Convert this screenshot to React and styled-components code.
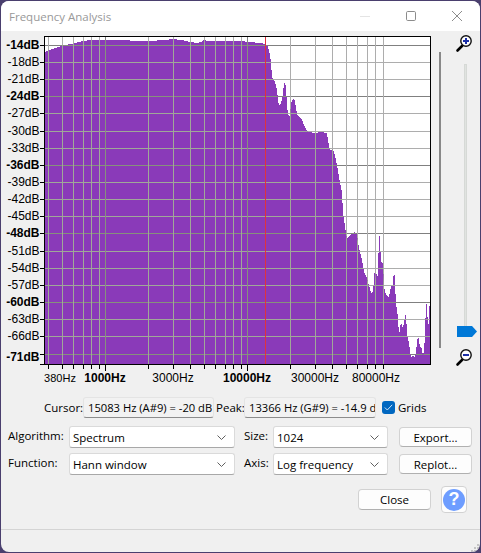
import React from 'react'
import styled, { createGlobalStyle } from 'styled-components'

const GlobalStyle = createGlobalStyle`
  html, body {
    margin: 0;
    padding: 0;
    background: #4a3f6e;
  }
`

const Win = styled.div`
  width: 479px;
  height: 551px;
  margin: 1px;
  display: flex;
  flex-direction: column;
  overflow: hidden;
  border-radius: 8px;
  background: #f0f0f0;
  color: #000;
  font-family: "Open Sans", "Noto Sans", sans-serif;
  font-size: 11.5px;
`

const TitleBar = styled.div`
  height: 30px;
  flex: none;
  display: flex;
  align-items: center;
  justify-content: space-between;
  background: #fff;
  padding-left: 8px;
  color: #999;
`

const WinButtons = styled.div`
  display: flex;
  align-items: center;
`

const WinButton = styled.svg`
  width: 46px;
  height: 30px;
  display: block;
`

const ChartRow = styled.div`
  height: 360px;
  flex: none;
  display: flex;
`

const Chart = styled.svg`
  width: 435px;
  height: 360px;
  flex: none;
  display: block;
`

const Rail = styled.div`
  width: 2px;
  height: 296px;
  flex: none;
  margin: 21px 0 0 3px;
  background: #888;
`

const SliderCol = styled.div`
  flex: 1;
  display: flex;
  flex-direction: column;
  align-items: center;
  padding: 2px 0 0 9px;
`

const ZoomIcon = styled.svg`
  width: 20px;
  height: 20px;
  flex: none;
  display: block;
`

const Track = styled.div`
  position: relative;
  width: 3px;
  height: 263px;
  flex: none;
  margin: 11px 0 20px;
  background: #e0e3e0;
  border: 1px solid #d6d9d6;
  box-sizing: border-box;
`

const Thumb = styled.svg`
  position: absolute;
  left: -8px;
  bottom: -11px;
  width: 20px;
  height: 11px;
  display: block;
`

const InfoRow = styled.div`
  height: 21px;
  flex: none;
  margin-top: 6px;
  padding-left: 43px;
  display: flex;
  align-items: center;
`

const InfoLabel = styled.span`
  width: ${props => props.$width}px;
  flex: none;
  box-sizing: border-box;
  padding-left: ${props => props.$pad || 0}px;
  white-space: nowrap;
`

const ReadOut = styled.div`
  width: ${props => props.$width}px;
  height: 21px;
  flex: none;
  box-sizing: border-box;
  padding: 0 0 0 4px;
  overflow: hidden;
  white-space: nowrap;
  font-size: 11.2px;
  line-height: 19px;
  background: #f2f2f2;
  border: 1px solid #e4e4e4;
  border-bottom: 1px solid #8c8c8c;
  border-radius: 3px;
`

const GridCheck = styled.label`
  display: flex;
  align-items: center;
  gap: 3px;
  margin-left: 6px;
`

const CheckBox = styled.span`
  width: 13px;
  height: 13px;
  display: flex;
  align-items: center;
  justify-content: center;
  background: #0067c0;
  border-radius: 3px;
`

const FormRow = styled.div`
  height: 22px;
  flex: none;
  margin-top: ${props => props.$top}px;
  padding-left: 7px;
  display: flex;
  align-items: center;
`

const Field = styled.div`
  display: flex;
  align-items: center;
  margin-right: ${props => props.$after}px;
`

const FieldLabel = styled.span`
  width: ${props => props.$width}px;
  flex: none;
  margin-top: -3px;
`

const Select = styled.div`
  width: ${props => props.$width}px;
  height: 22px;
  box-sizing: border-box;
  display: flex;
  align-items: center;
  justify-content: space-between;
  padding: 0 8px 0 3px;
  background: #fff;
  border: 1px solid #dadada;
  border-bottom-color: #a8a8a8;
  border-radius: 3px;
`

const Button = styled.button`
  width: 73px;
  height: ${props => props.$height || 20}px;
  flex: none;
  padding: 0;
  background: #fdfdfd;
  border: 1px solid #d2d2d2;
  border-bottom-color: #b0b0b0;
  border-radius: 4px;
  font: inherit;
  color: #000;
`

const ActionRow = styled.div`
  height: 27px;
  flex: none;
  margin-top: 11px;
  padding-right: 13px;
  display: flex;
  align-items: center;
  justify-content: flex-end;
  gap: 10px;
`

const HelpButton = styled.button`
  width: 26px;
  height: 27px;
  padding: 0;
  display: flex;
  align-items: center;
  justify-content: center;
  background: #fdfdfd;
  border: 1px solid #d2d2d2;
  border-radius: 4px;
`

const HelpDot = styled.span`
  width: 22px;
  height: 22px;
  display: flex;
  align-items: center;
  justify-content: center;
  border-radius: 50%;
  background: #6e9dff;
  color: #fff;
  font-family: "Liberation Sans", sans-serif;
  font-size: 18px;
  font-weight: bold;
`

const Footer = styled.div`
  position: relative;
  flex: 1;
  margin-top: 16px;
  border-top: 1px solid #d4d4d4;
`

const Grip = styled.svg`
  position: absolute;
  right: 1px;
  bottom: 0;
  width: 9px;
  height: 9px;
  display: block;
`

const PLOT = { left: 45, right: 430, top: 36, bottom: 364 }

// x position of a frequency on the log axis
const freqX = f => Math.round(105 + 142 * Math.log10(f / 1000))

const FREQS = [400, 500, 600, 700, 800, 900, 1000, 2000, 3000, 4000, 5000, 6000, 7000, 8000, 9000, 10000, 20000, 30000, 40000, 50000, 60000, 70000, 80000, 90000]

const DB_ROWS = [
  ['-14dB', 45, true], ['-18dB', 62], ['-21dB', 79], ['-24dB', 96, true],
  ['-27dB', 113], ['-30dB', 131], ['-33dB', 148], ['-36dB', 165, true],
  ['-39dB', 182], ['-42dB', 199], ['-45dB', 216], ['-48dB', 233, true],
  ['-51dB', 251], ['-54dB', 268], ['-57dB', 285], ['-60dB', 302, true],
  ['-63dB', 319], ['-66dB', 336], ['-71dB', 354, true]
]

const HZ_LABELS = [
  ['380Hz', 60, false, 11], ['1000Hz', 105, true, 12], ['3000Hz', 173, false, 12],
  ['10000Hz', 247, true, 12], ['30000Hz', 315, false, 12], ['80000Hz', 376, false, 12]
]

const SPECTRUM = [
  [45, 52], [47, 51], [52, 49], [58, 47], [64, 45], [72, 44], [75, 43], [83, 41], [90, 40], [129, 40], [130, 41], [148, 41],
  [165, 40], [172, 39], [182, 40], [190, 42], [197, 43], [201, 42], [204, 40], [208, 41], [240, 41], [250, 42], [260, 43], [266, 44],
  [268, 47], [270, 55], [271, 62], [272, 77], [275, 82], [277, 90], [278, 100], [279, 105], [281, 104], [283, 93], [284, 83], [285, 82],
  [286, 87], [287, 107], [289, 117], [290, 115], [291, 103], [293, 99], [294, 98], [296, 107], [297, 115], [302, 120], [305, 127], [308, 132],
  [315, 133], [320, 132], [327, 133], [328, 140], [330, 150], [333, 149], [335, 155], [337, 165], [339, 177], [340, 182], [342, 193], [343, 213],
  [346, 233], [347, 239], [352, 233], [355, 232], [357, 235], [359, 248], [362, 260], [364, 272], [367, 278], [371, 293], [373, 292], [375, 267],
  [376, 280], [377, 268], [378, 283], [379, 225], [380, 247], [382, 267], [383, 260], [384, 287], [386, 295], [389, 297], [391, 286], [393, 286],
  [394, 266], [396, 303], [398, 318], [399, 335], [401, 322], [403, 328], [406, 313], [407, 335], [409, 343], [411, 358], [413, 355], [415, 358],
  [417, 343], [418, 335], [420, 347], [422, 348], [423, 358], [425, 338], [426, 298], [428, 323], [429, 325], [430, 288], [430, 364], [45, 364]
]

const GridLines = ({ light, dark, clipPath }) => (
  <g clipPath={clipPath} shapeRendering="crispEdges" strokeWidth="1">
    {DB_ROWS.map(([label, y, major]) => (
      <line key={label} x1={PLOT.left} x2={PLOT.right} y1={y + 0.5} y2={y + 0.5} stroke={major ? dark : light} />
    ))}
    {FREQS.map(f => (
      <line key={f} x1={freqX(f) + 0.5} x2={freqX(f) + 0.5} y1={PLOT.top} y2={PLOT.bottom} stroke={f === 1000 || f === 10000 ? dark : light} />
    ))}
  </g>
)

const Spectrum = () => {
  const points = SPECTRUM.map(p => p.join(',')).join(' ')
  return (
    <Chart viewBox="1 31 435 360">
      <defs>
        <clipPath id="spectrum-area">
          <polygon points={points} />
        </clipPath>
      </defs>
      <rect x={PLOT.left} y={PLOT.top} width={PLOT.right - PLOT.left} height={PLOT.bottom - PLOT.top} fill="#fff" />
      <GridLines light="#adadad" dark="#808080" />
      <polygon points={points} fill="#8a3ab9" shapeRendering="crispEdges" />
      <GridLines light="#a0a898" dark="#87907c" clipPath="url(#spectrum-area)" />
      <line x1="265.5" x2="265.5" y1={PLOT.top} y2={PLOT.bottom} stroke="#e0323c" shapeRendering="crispEdges" />
      <rect x="44.5" y="36.5" width="386" height="328" fill="none" stroke="#000" shapeRendering="crispEdges" />
      <g stroke="#000" shapeRendering="crispEdges">
        {DB_ROWS.map(([label, y]) => <line key={label} x1="40" x2="44" y1={y + 0.5} y2={y + 0.5} />)}
        <line x1="40" x2="44" y1="364.5" y2="364.5" />
        {FREQS.map(f => (
          <line key={f} x1={freqX(f) + 0.5} x2={freqX(f) + 0.5} y1="365" y2={f === 1000 || f === 10000 ? 371 : 369} />
        ))}
      </g>
      <g fontFamily="'Liberation Sans', Arial, sans-serif" fontSize="12" fill="#000">
        {DB_ROWS.map(([label, y, major]) => (
          <text key={label} x="39.5" y={label === '-71dB' ? 361 : y + 4} textAnchor="end" fontWeight={major ? 'bold' : 'normal'}>{label}</text>
        ))}
        {HZ_LABELS.map(([label, x, major, size]) => (
          <text key={label} x={x} y="382" textAnchor="middle" fontSize={size} fontWeight={major ? 'bold' : 'normal'}>{label}</text>
        ))}
      </g>
    </Chart>
  )
}

const Magnifier = ({ plus }) => (
  <ZoomIcon viewBox="0 0 20 20">
    <path d="M2.5 17.5 L7 13" stroke="#000" strokeWidth="2.6" strokeLinecap="round" />
    <circle cx="11" cy="8" r="5.2" fill="#fff" stroke="#111" strokeWidth="1.4" />
    <rect x="8" y="7" width="6" height="2" fill="#1c2fa8" />
    {plus && <rect x="10" y="5" width="2" height="6" fill="#1c2fa8" />}
  </ZoomIcon>
)

const Chevron = () => (
  <svg width="9" height="5" viewBox="0 0 9 5">
    <path d="M0.5 0.5 L4.5 4.5 L8.5 0.5" fill="none" stroke="#606060" />
  </svg>
)

const Dropdown = ({ width, children }) => (
  <Select $width={width}>
    <span>{children}</span>
    <Chevron />
  </Select>
)

const GRIP_DOTS = [[7, 1], [4, 4], [7, 4], [1, 7], [4, 7], [7, 7]]

export default function App() {
  return (
    <>
      <GlobalStyle />
      <Win>
        <TitleBar>
          Frequency Analysis
          <WinButtons>
            <WinButton viewBox="0 0 46 30">
              <line x1="18" x2="28" y1="15.5" y2="15.5" stroke="#e4e4e4" />
            </WinButton>
            <WinButton viewBox="0 0 46 30">
              <rect x="18.5" y="10.5" width="9" height="9" rx="1.2" fill="none" stroke="#8c8c8c" />
            </WinButton>
            <WinButton viewBox="0 0 46 30">
              <path d="M18 10 L28 20 M28 10 L18 20" stroke="#8c8c8c" fill="none" />
            </WinButton>
          </WinButtons>
        </TitleBar>

        <ChartRow>
          <Spectrum />
          <Rail />
          <SliderCol>
            <Magnifier plus />
            <Track>
              <Thumb viewBox="0 0 20 11">
                <polygon points="0,0 15,0 20,5.5 15,11 0,11" fill="#0078d7" />
              </Thumb>
            </Track>
            <Magnifier />
          </SliderCol>
        </ChartRow>

        <InfoRow>
          <InfoLabel $width={39}>Cursor:</InfoLabel>
          <ReadOut $width={131}>15083 Hz (A#9) = -20 dB</ReadOut>
          <InfoLabel $width={30} $pad={2}>Peak:</InfoLabel>
          <ReadOut $width={132}>13366 Hz (G#9) = -14.9 dB</ReadOut>
          <GridCheck>
            <CheckBox>
              <svg width="9" height="7" viewBox="0 0 9 7">
                <path d="M0.8 3.5 L3.3 6 L8.2 0.8" fill="none" stroke="#cfe2f5" />
              </svg>
            </CheckBox>
            Grids
          </GridCheck>
        </InfoRow>

        <FormRow $top={8}>
          <Field $after={9}>
            <FieldLabel $width={61}>Algorithm:</FieldLabel>
            <Dropdown width={166}>Spectrum</Dropdown>
          </Field>
          <Field $after={11}>
            <FieldLabel $width={29}>Size:</FieldLabel>
            <Dropdown width={115}>1024</Dropdown>
          </Field>
          <Button>Export...</Button>
        </FormRow>

        <FormRow $top={5}>
          <Field $after={9}>
            <FieldLabel $width={61}>Function:</FieldLabel>
            <Dropdown width={166}>Hann window</Dropdown>
          </Field>
          <Field $after={11}>
            <FieldLabel $width={29}>Axis:</FieldLabel>
            <Dropdown width={115}>Log frequency</Dropdown>
          </Field>
          <Button>Replot...</Button>
        </FormRow>

        <ActionRow>
          <Button $height={21}>Close</Button>
          <HelpButton>
            <HelpDot>?</HelpDot>
          </HelpButton>
        </ActionRow>

        <Footer>
          <Grip viewBox="0 0 9 9">
            {GRIP_DOTS.map(([x, y]) => <rect key={`${x}-${y}`} x={x} y={y} width="2" height="2" fill="#c4c4c4" />)}
          </Grip>
        </Footer>
      </Win>
    </>
  )
}
